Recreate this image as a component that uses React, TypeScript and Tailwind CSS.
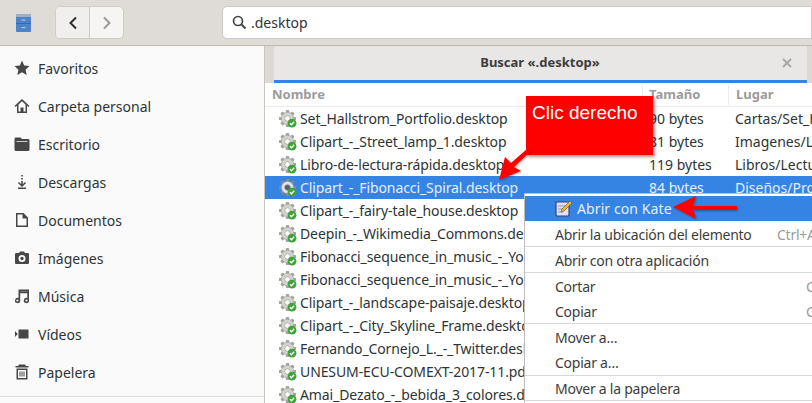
import React from "react";

const F = { fontFamily: '"Noto Sans", sans-serif' };

function Gear({ light }: { light?: boolean }) {
  const c = light ? "#dfe3e6" : "#d4d4d0";
  const d = light ? "#7f8b95" : "#a3a39e";
  const teeth = [0, 45, 90, 135, 180, 225, 270, 315];
  return (
    <svg width="18" height="18" viewBox="0 0 18 18" className="shrink-0">
      {teeth.map((a) => (
        <rect key={a} x="6.9" y="0.2" width="3.2" height="16.6" rx="0.6" fill={d} transform={`rotate(${a} 8.5 8.5)`} />
      ))}
      <circle cx="8.5" cy="8.5" r="6.2" fill={c} stroke={d} strokeWidth="0.7" />
      <circle cx="8.5" cy="8.5" r="2.8" fill={light ? "#54616d" : "#fbfbfb"} stroke={d} strokeWidth="0.8" />
      <circle cx="13" cy="13.2" r="4.4" fill="#3fa33a" />
      <path d="M10.9 13.2l1.6 1.6 2.7-3" fill="none" stroke="#fff" strokeWidth="1.3" />
    </svg>
  );
}

const icons: Record<string, React.ReactNode> = {
  star: <path d="M8 0.6l2.2 4.9 5.3.6-3.9 3.6 1.1 5.2L8 12.2l-4.7 2.7 1.1-5.2L.5 6.1l5.3-.6z" />,
  home: (
    <path
      fillRule="evenodd"
      d="M8 1L0.5 8l1 1L3 7.8V15h10V7.8L14.5 9l1-1zM4.5 6.5L8 3.2l3.5 3.3v7H9.5V9.5h-3v4h-2z"
    />
  ),
  folder: <path d="M0.5 3C0.5 2.1 1.1 1.5 2 1.5h4.5L8 3h6c.9 0 1.5.5 1.5 1.5v9c0 .9-.6 1.5-1.5 1.5H2c-.9 0-1.5-.6-1.5-1.5zM2.5 5V5.8h11V5z" />,
  down: (
    <path d="M7.2 1h1.6v1.6H7.2zM7.2 4h1.6v1.6H7.2zM7.2 7h1.6v3.2l2.2-2.2 1.1 1.1L8 13 3.9 9.1 5 8l2.2 2.2zM4 13.5h8V15H4z" />
  ),
  doc: <path fillRule="evenodd" d="M2 1h7.5L14 5.5V15H2zM3.5 2.5v11h9V6.5H8.5v-4z" />,
  camera: (
    <path
      fillRule="evenodd"
      d="M5 3l1-1.5h4L11 3h2.5C14.5 3 15 3.5 15 4.5v8c0 1-.5 1.5-1.5 1.5h-11C1.5 14 1 13.5 1 12.5v-8C1 3.5 1.5 3 2.5 3zM8 5a3.5 3.5 0 100 7 3.5 3.5 0 000-7zm0 1.8a1.7 1.7 0 110 3.4 1.7 1.7 0 010-3.4z"
    />
  ),
  music: (
    <path
      fillRule="evenodd"
      d="M4.5 1.5h10.5v11a2.6 2.6 0 11-1.7-2.4V5.2H6.2v7.3a2.6 2.6 0 11-1.7-2.4zM6.2 3.2v.4h7.1v-.4zM3.4 11.4a1.1 1.1 0 100 2.2 1.1 1.1 0 000-2.2zm9.1 0a1.1 1.1 0 100 2.2 1.1 1.1 0 000-2.2z"
    />
  ),
  video: <path d="M4.5 3.5h10v9h-10zM1 5l2.8 3L1 11z" />,
  trash: (
    <path
      fillRule="evenodd"
      d="M5 0.5h6l1 1.5h2.5v1.5h-13V2H4zM2.5 4.5H13.5V15.5H2.5zM4 6v8h8V6zM5.5 7.5h1v5h-1zM7.5 7.5h1v5h-1zM9.5 7.5h1v5h-1z"
    />
  ),
};

const side: [string, string][] = [
  ["star", "Favoritos"],
  ["home", "Carpeta personal"],
  ["folder", "Escritorio"],
  ["down", "Descargas"],
  ["doc", "Documentos"],
  ["camera", "Imágenes"],
  ["music", "Música"],
  ["video", "Vídeos"],
  ["trash", "Papelera"],
];

const rows: [string, string, string][] = [
  ["Set_Hallstrom_Portfolio.desktop", "90 bytes", "Cartas/Set_Hallstrom"],
  ["Clipart_-_Street_lamp_1.desktop", "81 bytes", "Imagenes/Lamp"],
  ["Libro-de-lectura-rápida.desktop", "119 bytes", "Libros/Lectura"],
  ["Clipart_-_Fibonacci_Spiral.desktop", "84 bytes", "Diseños/Proyecto"],
  ["Clipart_-_fairy-tale_house.desktop", "", ""],
  ["Deepin_-_Wikimedia_Commons.desktop", "", ""],
  ["Fibonacci_sequence_in_music_-_YouTube", "", ""],
  ["Fibonacci_sequence_in_music_-_YouTube", "", ""],
  ["Clipart_-_landscape-paisaje.desktop", "", ""],
  ["Clipart_-_City_Skyline_Frame.desktop", "", ""],
  ["Fernando_Cornejo_L._-_Twitter.desktop", "", ""],
  ["UNESUM-ECU-COMEXT-2017-11.pdf", "", ""],
  ["Amai_Dezato_-_bebida_3_colores.desktop", "", ""],
];

function MenuItem({
  label,
  right,
  sep,
  h,
  labelW,
}: {
  label: string;
  right?: string;
  sep?: boolean;
  h: string;
  labelW?: string;
}) {
  return (
    <div className={`flex items-center pl-[30px] text-[14px] tracking-[-0.25px] text-[#3d3d3d] ${h} ${sep ? "border-b border-[#d8d8d8]" : ""}`}>
      <span className={`shrink-0 whitespace-nowrap ${labelW ?? ""}`}>{label}</span>
      {right && <span className="shrink-0 whitespace-nowrap text-[#9a9a9a]">{right}</span>}
    </div>
  );
}

export default function App() {
  return (
    <div className="relative flex h-[403px] w-[812px] flex-col overflow-hidden bg-white" style={F}>
      {/* Header */}
      <header className="flex h-[46px] shrink-0 items-center border-b border-[#bfb9b1] bg-[#dfdbd6]">
        <svg width="15" height="18" viewBox="0 0 15 18" className="ml-[16px] shrink-0">
          <rect x="0" y="0" width="15" height="18" rx="1" fill="#4f83c9" />
          <rect x="0" y="0" width="15" height="3" fill="#9bb0cc" />
          <rect x="0" y="9" width="15" height="1" fill="#3768a8" />
          <rect x="5.5" y="5.5" width="4" height="1.2" fill="#a9c2e2" />
          <rect x="5.5" y="13" width="4" height="1.2" fill="#a9c2e2" />
        </svg>
        <div className="ml-[24px] flex h-[33px] w-[69px] overflow-hidden rounded-[5px] border border-[#cfcbc5] bg-[#f6f5f4]">
          <div className="flex w-[34px] items-center justify-center border-r border-[#cfcbc5] bg-[#f1efed]">
            <svg width="10" height="14" viewBox="0 0 10 14">
              <path d="M8 1.5L2.5 7 8 12.5" fill="none" stroke="#2e2e2e" strokeWidth="2" />
            </svg>
          </div>
          <div className="flex flex-1 items-center justify-center">
            <svg width="10" height="14" viewBox="0 0 10 14">
              <path d="M2 1.5L7.5 7 2 12.5" fill="none" stroke="#9a9a98" strokeWidth="2" />
            </svg>
          </div>
        </div>
        <div className="ml-[98px] flex h-[33px] flex-1 items-center rounded-l-[5px] border border-[#cfcbc5] bg-white pl-[9px] text-[14px] text-[#2e3436]">
          <svg width="15" height="15" viewBox="0 0 15 15" className="shrink-0">
            <circle cx="6" cy="6" r="4.5" fill="none" stroke="#444" strokeWidth="1.7" />
            <path d="M9.5 9.5l4 4" stroke="#444" strokeWidth="2" />
          </svg>
          <span className="ml-[4px]">.desktop</span>
        </div>
      </header>

      <div className="flex min-h-0 flex-1">
        {/* Sidebar */}
        <aside className="w-[265px] shrink-0 border-r border-[#c9c5bf] bg-[#fafafa] pt-[3px]">
          {side.map(([ic, label]) => (
            <div key={label} className="flex h-[38px] items-center pl-[14px] text-[14px] text-[#2e3436]">
              <svg width="16" height="16" viewBox="0 0 16 16" fill="#474747" className="shrink-0">
                {icons[ic]}
              </svg>
              <span className="ml-[8px]">{label}</span>
            </div>
          ))}
          <div className="mt-[5px] border-t border-[#dcdcdc]" />
        </aside>

        {/* Main */}
        <main className="flex min-w-0 flex-1 flex-col">
          <div className="flex h-[37px] shrink-0 bg-[#dcd8d3]">
            <div className="ml-[9px] mr-[5px] flex flex-1 items-center border-b-[3px] border-[#3584e4] bg-[#e9e7e5]">
              <span className="flex-1 pl-[24px] text-center text-[13px] font-bold text-[#3d3d3d]">Buscar «.desktop»</span>
              <svg width="10" height="10" viewBox="0 0 10 10" className="mr-[15px]">
                <path d="M1 1l8 8M9 1L1 9" stroke="#a8a8a8" strokeWidth="2" />
              </svg>
            </div>
          </div>
          <div className="flex h-[24px] shrink-0 items-center border-b border-[#ececec] pt-[1px] text-[13px] font-bold text-[#9b9b9b]">
            <span className="w-[377px] shrink-0 pl-[7px]">Nombre</span>
            <span className="w-[86px] shrink-0 border-l border-[#ececec] pl-[6px]">Tamaño</span>
            <span className="border-l border-[#ececec] pl-[7px]">Lugar</span>
          </div>
          <div className="min-h-0 flex-1">
            {rows.map(([n, s, l], i) => (
              <div
                key={i}
                className={`flex h-[23px] items-center overflow-hidden whitespace-nowrap text-[14px] ${i === 3 ? "bg-[#3584e4] text-[#e6effa]" : "text-[#2e3436]"}`}
              >
                <div className="flex w-[377px] shrink-0 items-center overflow-hidden pl-[14px]">
                  <Gear light={i === 3} />
                  <span className="ml-[3px] tracking-[-0.1px]">{n}</span>
                </div>
                <span className="w-[86px] shrink-0 pl-[7px]">{s}</span>
                <span className="pl-[7px]">{l}</span>
              </div>
            ))}
          </div>
        </main>
      </div>

      {/* Context menu */}
      <div className="absolute left-[524px] top-[193px] h-[210px] w-[288px] overflow-hidden border-l border-t border-[#bdbdbd] bg-white pt-[2px]">
        <div className="flex h-[25px] items-center bg-[#3584e4] pl-[30px] text-[14px] tracking-[0.1px] text-[#e6effa]">
          <svg width="17" height="17" viewBox="0 0 17 17" className="mr-[5px] shrink-0">
            <rect x="1" y="2" width="13" height="14" rx="1" fill="#dfe3f5" stroke="#3a3f7a" strokeWidth="1.2" />
            <path d="M3 6h8M3 9h6M3 12h5" stroke="#8a90c0" strokeWidth="1" />
            <path d="M6 12l1-3 8-8 2 2-8 8z" fill="#f2b632" stroke="#7a4e10" strokeWidth="0.6" />
          </svg>
          <span>Abrir con Kate</span>
        </div>
        <MenuItem label="Abrir la ubicación del elemento" right="Ctrl+Alt+O" labelW="w-[222px]" h="h-[26px] pt-[2px]" sep />
        <MenuItem label="Abrir con otra aplicación" h="h-[26px] pt-[2px]" sep />
        <MenuItem label="Cortar" right="Ctrl+X" labelW="w-[251px]" h="h-[25px] pt-[2px]" />
        <MenuItem label="Copiar" right="Ctrl+C" labelW="w-[251px]" h="h-[26px] pt-[2px]" sep />
        <MenuItem label="Mover a…" h="h-[26px]" />
        <MenuItem label="Copiar a…" h="h-[26px]" sep />
        <MenuItem label="Mover a la papelera" h="h-[25px]" sep />
      </div>

      {/* Callout */}
      <div
        className="absolute left-[526px] top-[96px] h-[59px] w-[127px] bg-[#ff0000] pl-[6px] pt-[4px] text-[19px] leading-[26px] text-white shadow-[2px_2px_3px_rgba(0,0,0,0.4)]"
        style={{ fontFamily: '"Liberation Sans", sans-serif' }}
      >
        Clic derecho
      </div>

      {/* Arrows */}
      <svg width="812" height="403" className="pointer-events-none absolute left-0 top-0">
        <defs>
          <filter id="s" x="-20%" y="-20%" width="140%" height="140%">
            <feDropShadow dx="1" dy="1" stdDeviation="1" floodColor="#000" floodOpacity="0.35" />
          </filter>
        </defs>
        <g fill="#ff0000" filter="url(#s)">
          <path d="M499 180L505 157L511 163L527 149L530 152L514 167L521 171Z" />
          <path d="M673 207L696 196L693 206L737 206L737 210L693 210L696 219Z" />
        </g>
      </svg>
    </div>
  );
}
